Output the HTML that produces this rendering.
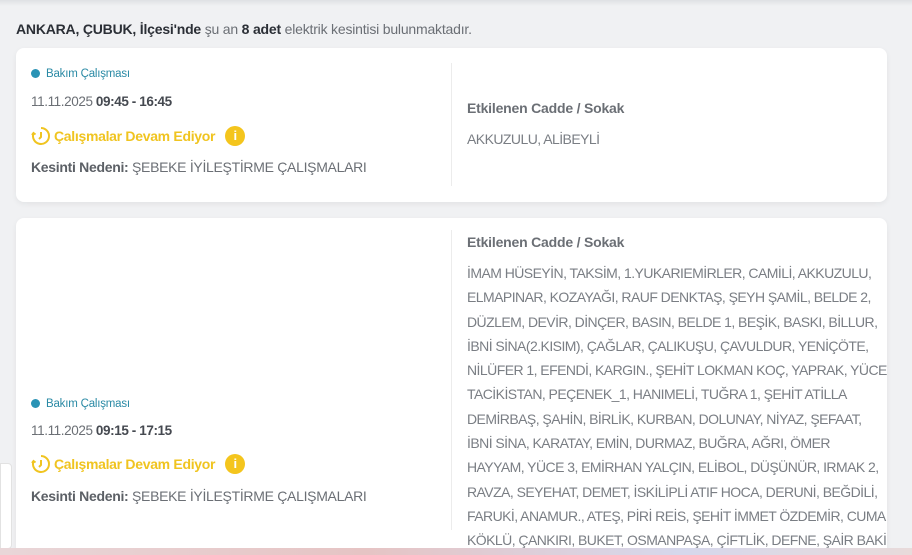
<!DOCTYPE html>
<html><head><meta charset="utf-8"><style>
*{margin:0;padding:0;box-sizing:border-box}
html,body{width:912px;height:555px;overflow:hidden}
body{background:#f0f1f3;font-family:"Liberation Sans",sans-serif;color:#6b6f75;position:relative}
.top{position:absolute;left:0;top:0;width:912px;height:6px;background:linear-gradient(#dfe1e4,#f0f1f3)}
.head{position:absolute;left:16px;top:21px;font-size:14px;color:#6b6f75;letter-spacing:-0.2px}
.head b{color:#2b2f36}
.card{position:absolute;left:16px;width:871px;background:#fff;border-radius:8px;box-shadow:0 2px 6px rgba(0,0,0,.06);overflow:hidden}
.div{position:absolute;left:435px;width:1px;background:#ececec}
.tag{position:absolute;left:15px;font-size:11.5px;color:#2a8aa5;letter-spacing:-0.2px}
.tag:before{content:"";display:inline-block;width:9px;height:9px;border-radius:50%;background:#2a93b5;margin-right:6px;vertical-align:-1px}
.date{position:absolute;left:15px;font-size:13.5px;color:#6b6f75;letter-spacing:-0.4px}
.date b{color:#454950}
.st{position:absolute;left:15px;font-size:14px;font-weight:bold;color:#f0c420;letter-spacing:-0.3px;display:flex;align-items:center}
.st svg{margin-right:3px}
.st i{display:inline-block;width:20px;height:20px;border-radius:50%;background:#f4c51d;color:#fff;font-style:normal;font-size:13px;text-align:center;line-height:20px;margin-left:10px}
.rs{position:absolute;left:15px;font-size:14px;color:#6b6f75;letter-spacing:-0.3px}
.rs b{color:#5c6066}
.rt{position:absolute;left:451px;font-size:14px;font-weight:bold;color:#6b6f75;letter-spacing:-0.2px}
.rl{position:absolute;left:451px;font-size:14px;color:#7a7e84;line-height:24.3px;letter-spacing:-0.55px;white-space:nowrap}
.bar{position:absolute;left:0;top:548px;width:912px;height:7px;background:linear-gradient(90deg,#e9d6d8,#e6c4c4 40%,#d6d8ec 75%,#e8dada)}
.tab{position:absolute;left:0;top:463px;width:12px;height:86px;background:#fff;border:1px solid #e2e2e2;border-radius:0 4px 4px 0}
</style></head><body>
<div class="top"></div>
<div class="head"><b>ANKARA, ÇUBUK, İlçesi'nde</b> şu an <b>8 adet</b> elektrik kesintisi bulunmaktadır.</div>
<div class="card" style="top:48px;height:154px">
 <div class="div" style="top:15px;height:123px"></div>
 <div class="tag" style="top:20px">Bakım Çalışması</div>
 <div class="date" style="top:46px">11.11.2025 <b>09:45 - 16:45</b></div>
 <div class="st" style="top:78px"><svg width="20" height="20" viewBox="0 0 20 20" fill="none" stroke="#f0c420" stroke-width="2"><path d="M10 2a8 8 0 1 1-7.5 5.2"/><path d="M1 9l1.5-2 2 1.5"/><path d="M10 6v5l-2 2"/></svg>Çalışmalar Devam Ediyor<i>i</i></div>
 <div class="rs" style="top:111px"><b>Kesinti Nedeni:</b> ŞEBEKE İYİLEŞTİRME ÇALIŞMALARI</div>
 <div class="rt" style="top:52px">Etkilenen Cadde / Sokak</div>
 <div class="rl" style="top:79px">AKKUZULU, ALİBEYLİ</div>
</div>
<div class="card" style="top:218px;height:337px;border-radius:8px 8px 0 0">
 <div class="div" style="top:12px;height:300px"></div>
 <div class="tag" style="top:180px">Bakım Çalışması</div>
 <div class="date" style="top:205px">11.11.2025 <b>09:15 - 17:15</b></div>
 <div class="st" style="top:236px"><svg width="20" height="20" viewBox="0 0 20 20" fill="none" stroke="#f0c420" stroke-width="2"><path d="M10 2a8 8 0 1 1-7.5 5.2"/><path d="M1 9l1.5-2 2 1.5"/><path d="M10 6v5l-2 2"/></svg>Çalışmalar Devam Ediyor<i>i</i></div>
 <div class="rs" style="top:270px"><b>Kesinti Nedeni:</b> ŞEBEKE İYİLEŞTİRME ÇALIŞMALARI</div>
 <div class="rt" style="top:16px">Etkilenen Cadde / Sokak</div>
 <div class="rl" style="top:43px">İMAM HÜSEYİN, TAKSİM, 1.YUKARIEMİRLER, CAMİLİ, AKKUZULU,<br>ELMAPINAR, KOZAYAĞI, RAUF DENKTAŞ, ŞEYH ŞAMİL, BELDE 2,<br>DÜZLEM, DEVİR, DİNÇER, BASIN, BELDE 1, BEŞİK, BASKI, BİLLUR,<br>İBNİ SİNA(2.KISIM), ÇAĞLAR, ÇALIKUŞU, ÇAVULDUR, YENİÇÖTE,<br>NİLÜFER 1, EFENDİ, KARGIN., ŞEHİT LOKMAN KOÇ, YAPRAK, YÜCE 2,<br>TACİKİSTAN, PEÇENEK_1, HANIMELİ, TUĞRA 1, ŞEHİT ATİLLA<br>DEMİRBAŞ, ŞAHİN, BİRLİK, KURBAN, DOLUNAY, NİYAZ, ŞEFAAT,<br>İBNİ SİNA, KARATAY, EMİN, DURMAZ, BUĞRA, AĞRI, ÖMER<br>HAYYAM, YÜCE 3, EMİRHAN YALÇIN, ELİBOL, DÜŞÜNÜR, IRMAK 2,<br>RAVZA, SEYEHAT, DEMET, İSKİLİPLİ ATIF HOCA, DERUNİ, BEĞDİLİ,<br>FARUKİ, ANAMUR., ATEŞ, PİRİ REİS, ŞEHİT İMMET ÖZDEMİR, CUMA,<br>KÖKLÜ, ÇANKIRI, BUKET, OSMANPAŞA, ÇİFTLİK, DEFNE, ŞAİR BAKİ,</div>
</div>
<div class="tab"></div>
<div class="bar"></div>
</body></html>
